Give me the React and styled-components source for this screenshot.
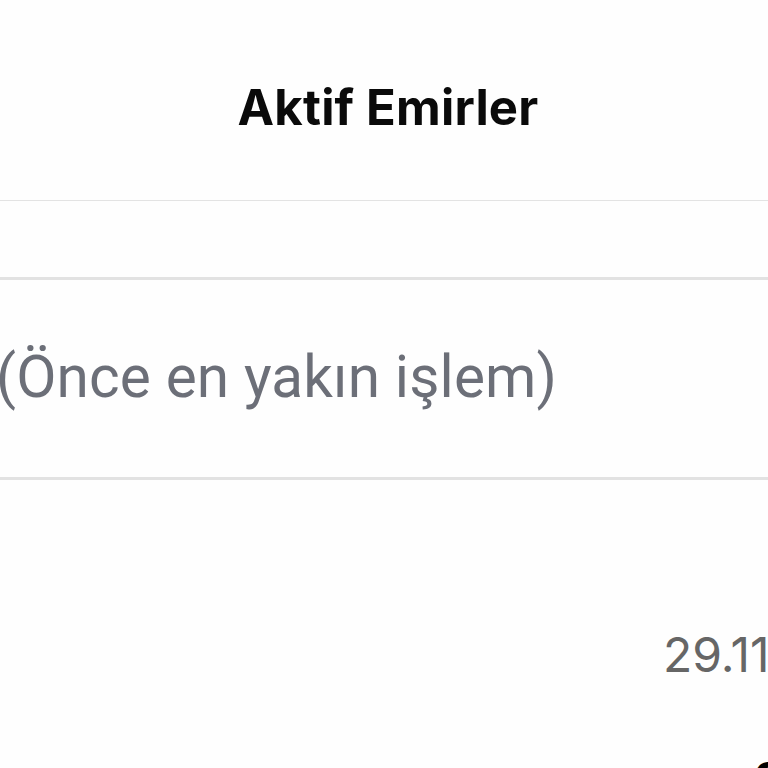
import React from "react";
import styled, { createGlobalStyle } from "styled-components";

const GlobalStyle = createGlobalStyle`
    html, body {
        margin: 0;
        padding: 0;
        background: #fefefe;
    }
`;

const Screen = styled.div`
    width: 768px;
    height: 768px;
    overflow: hidden;
    background: #fefefe;
    display: flex;
    flex-direction: column;
`;

const Header = styled.header`
    height: 201px;
    display: flex;
    justify-content: center;
    align-items: flex-start;
    padding-left: 8px;
    box-sizing: border-box;
    border-bottom: 1px solid #e3e3e3;
`;

const Title = styled.h1`
    margin: 78px 0 0 0;
    font-family: Inter, "Liberation Sans", sans-serif;
    font-size: 49px;
    font-weight: 700;
    line-height: 60px;
    color: #0a0a0a;
    letter-spacing: 0.2px;
`;

const Spacer = styled.div`
    height: 76px;
    border-bottom: 3px solid #e2e2e2;
`;

const SortRow = styled.div`
    height: 197px;
    display: flex;
    align-items: center;
    border-bottom: 3px solid #e2e2e2;
    overflow: hidden;
`;

const SortLabel = styled.span`
    margin-left: -4px;
    margin-top: -4px;
    font-family: Roboto, "Liberation Sans", sans-serif;
    font-size: 58.5px;
    letter-spacing: 0.15px;
    color: #6c6f78;
    white-space: nowrap;
`;

const OrderRow = styled.div`
    flex: 1;
    display: flex;
    flex-direction: column;
    padding-top: 145px;
    overflow: hidden;
`;

const OrderDate = styled.span`
    margin-left: 663px;
    font-family: Inter, "Liberation Sans", sans-serif;
    font-size: 48px;
    color: #666666;
    white-space: nowrap;
`;

const OrderValue = styled.span`
    margin-top: 66px;
    margin-left: 754px;
    font-family: Inter, "Liberation Sans", sans-serif;
    font-size: 48px;
    font-weight: 700;
    color: #000;
    white-space: nowrap;
`;

export default function App() {
    return (
        <>
            <GlobalStyle />
            <Screen>
                <Header>
                    <Title>Aktif Emirler</Title>
                </Header>
                <Spacer />
                <SortRow>
                    <SortLabel>(Önce en yakın işlem)</SortLabel>
                </SortRow>
                <OrderRow>
                    <OrderDate>29.11.2023</OrderDate>
                    <OrderValue>2</OrderValue>
                </OrderRow>
            </Screen>
        </>
    );
}
